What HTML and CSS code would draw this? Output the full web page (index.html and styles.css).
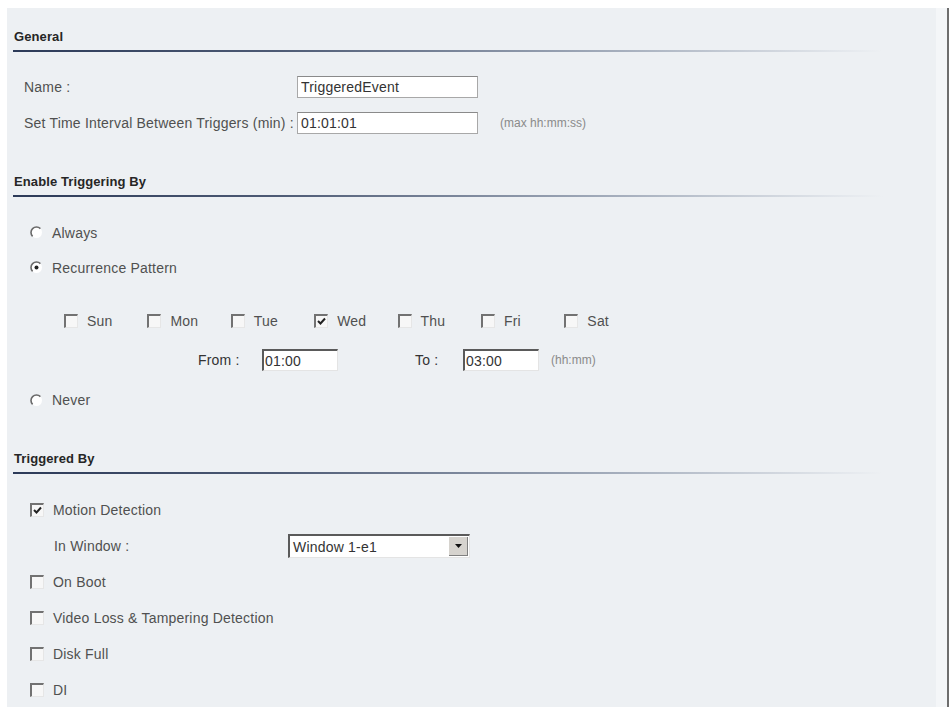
FILE: index.html
```html
<!DOCTYPE html>
<html lang="en">
<head>
    <meta charset="UTF-8">
    <title>Event Settings</title>
    <link rel="stylesheet" href="styles.css">
</head>
<body>

<div class="frame">
<div class="panel">

    <!-- General -->
    <div class="group-title">General</div>
    <div class="rule"></div>
    <div class="block first">
        <div class="field">
            <label class="field-label" for="name">Name :</label>
            <input class="text flat" id="name" type="text" value="TriggeredEvent">
        </div>
        <div class="field">
            <label class="field-label" for="interval">Set Time Interval Between Triggers (min) :</label>
            <input class="text flat" id="interval" type="text" value="01:01:01">
            <span class="hint hint-max">(max hh:mm:ss)</span>
        </div>
    </div>

    <!-- Enable Triggering By -->
    <div class="group-title gap">Enable Triggering By</div>
    <div class="rule"></div>
    <div class="block">
        <div class="option">
            <span class="radio">
                <svg width="13" height="13" viewBox="0 0 13 13"><circle cx="6.5" cy="6.5" r="5.5" fill="#fff"/><path d="M2.6 10.4 A5.5 5.5 0 0 1 10.4 2.6" fill="none" stroke="#6a6a6a" stroke-width="1.6"/></svg>
            </span>
            Always
        </div>
        <div class="option">
            <span class="radio">
                <svg width="13" height="13" viewBox="0 0 13 13"><circle cx="6.5" cy="6.5" r="5.5" fill="#fff"/><path d="M2.6 10.4 A5.5 5.5 0 0 1 10.4 2.6" fill="none" stroke="#6a6a6a" stroke-width="1.6"/><circle cx="6.5" cy="6.5" r="2" fill="#222"/></svg>
            </span>
            Recurrence Pattern
        </div>

        <div class="days">
            <div class="day"><span class="box"></span>Sun</div>
            <div class="day"><span class="box"></span>Mon</div>
            <div class="day"><span class="box"></span>Tue</div>
            <div class="day"><span class="box checked"><svg width="9" height="9" viewBox="0 0 9 9"><path d="M1 4 L3.5 6.5 L8 1.5" fill="none" stroke="#222" stroke-width="2"/></svg></span>Wed</div>
            <div class="day"><span class="box"></span>Thu</div>
            <div class="day"><span class="box"></span>Fri</div>
            <div class="day"><span class="box"></span>Sat</div>
        </div>

        <div class="range">
            <label class="range-label from" for="from">From :</label>
            <input class="text inset short" id="from" type="text" value="01:00">
            <label class="range-label to" for="to">To :</label>
            <input class="text inset short" id="to" type="text" value="03:00">
            <span class="hint hint-time">(hh:mm)</span>
        </div>

        <div class="option">
            <span class="radio">
                <svg width="13" height="13" viewBox="0 0 13 13"><circle cx="6.5" cy="6.5" r="5.5" fill="#fff"/><path d="M2.6 10.4 A5.5 5.5 0 0 1 10.4 2.6" fill="none" stroke="#6a6a6a" stroke-width="1.6"/></svg>
            </span>
            Never
        </div>
    </div>

    <!-- Triggered By -->
    <div class="group-title gap">Triggered By</div>
    <div class="rule"></div>
    <div class="block">
        <div class="option"><span class="box checked"><svg width="9" height="9" viewBox="0 0 9 9"><path d="M1 4 L3.5 6.5 L8 1.5" fill="none" stroke="#222" stroke-width="2"/></svg></span>Motion Detection</div>
        <div class="option sub">
            <span class="sub-label">In Window :</span>
            <div class="select">
                <span class="select-value">Window 1-e1</span>
                <span class="select-arrow"><svg width="7" height="4" viewBox="0 0 7 4"><path d="M0 0 H7 L3.5 4 Z" fill="#111"/></svg></span>
            </div>
        </div>
        <div class="option"><span class="box"></span>On Boot</div>
        <div class="option"><span class="box"></span>Video Loss &amp; Tampering Detection</div>
        <div class="option"><span class="box"></span>Disk Full</div>
        <div class="option"><span class="box"></span>DI</div>
    </div>

</div>
</div>

</body>
</html>
```

FILE: styles.css
```css
body {
    margin: 0;
    background-color: #fff;
    font-family: 'Liberation Sans', Arial, sans-serif;
    font-size: 14px;
    letter-spacing: 0.2px;
    color: #505050;
    overflow: hidden;
}
.frame {
    margin: 8px 0 0 7px;
    width: 940px;
    height: 720px;
    background-color: #f4f6f8;
    border-right: 2px solid #6e6e6e;
}
.panel {
    width: 929px;
    height: 100%;
    background-color: #edf0f3;
    padding: 21px 0 0 0;
    box-sizing: border-box;
}
.group-title {
    height: 16px;
    line-height: 16px;
    padding-left: 7px;
    font-size: 13px;
    font-weight: bold;
    letter-spacing: 0.1px;
    color: #262626;
}
.group-title.gap {
    margin-top: 33px;
}
.rule {
    margin: 5px 0 0 6px;
    width: 870px;
    height: 2px;
    background: linear-gradient(to right, #2c3a58 0%, #4d5a74 30%, #9aa4b4 65%, #e3e7ec 95%, rgba(237, 240, 243, 0) 100%);
}
.block {
    margin-top: 18px;
    padding-left: 17px;
}
.block.first {
    margin-top: 17px;
}
.field {
    display: flex;
    align-items: center;
    height: 36px;
}
.field-label {
    width: 273px;
    flex-shrink: 0;
    white-space: nowrap;
}
.text {
    box-sizing: border-box;
    height: 22px;
    padding: 0 3px;
    font-family: 'Liberation Sans', Arial, sans-serif;
    font-size: 14px;
    letter-spacing: 0.2px;
    color: #333;
    background-color: #fff;
    outline: none;
}
.text.flat {
    width: 181px;
    border: 1px solid #a8a8a8;
    border-top-color: #8a8a8a;
}
.text.inset {
    border-top: 2px solid #5a5a5a;
    border-left: 2px solid #5a5a5a;
    border-right: 1px solid #e4e4e4;
    border-bottom: 1px solid #e4e4e4;
    padding-left: 1px;
}
.text.short {
    width: 76px;
}
.hint {
    font-size: 12px;
    color: #8a8a8a;
    letter-spacing: 0;
}
.hint-max {
    margin-left: 22px;
}
.hint-time {
    margin-left: 12px;
}
.option {
    display: flex;
    align-items: center;
    height: 35px;
    padding-left: 6px;
}
.radio {
    width: 13px;
    height: 13px;
    margin-right: 9px;
    display: flex;
}
.box {
    box-sizing: border-box;
    width: 14px;
    height: 14px;
    margin-right: 9px;
    border-top: 2px solid #727272;
    border-left: 2px solid #727272;
    border-right: 1px solid #e6e6e6;
    border-bottom: 1px solid #e6e6e6;
    background-color: #f7f7f7;
    display: flex;
    align-items: center;
    justify-content: center;
    flex-shrink: 0;
}
.days {
    display: flex;
    height: 36px;
    align-items: center;
    margin-top: 18px;
    padding-left: 40px;
}
.day {
    width: 83.4px;
    display: flex;
    align-items: center;
}
.range {
    display: flex;
    align-items: center;
    height: 36px;
    margin-top: 3px;
    padding-left: 174px;
}
.range-label.from {
    width: 64px;
    color: #333;
}
.range-label.to {
    margin-left: 77px;
    width: 48px;
    color: #333;
}
.days + .range + .option {
    margin-top: 4px;
    height: 36px;
}
.block:last-child .option {
    height: 36px;
}
.option.sub {
    padding-left: 30px;
}
.sub-label {
    width: 234px;
}
.select {
    box-sizing: border-box;
    width: 182px;
    height: 24px;
    display: flex;
    align-items: center;
    justify-content: space-between;
    background-color: #fff;
    border-top: 2px solid #5a5a5a;
    border-left: 2px solid #5a5a5a;
    border-right: 1px solid #e4e4e4;
    border-bottom: 1px solid #e4e4e4;
    color: #333;
}
.select-value {
    padding-left: 3px;
}
.select-arrow {
    width: 19px;
    height: 19px;
    margin-right: 1px;
    background-color: #d6d3ce;
    border-right: 1px solid #808080;
    border-bottom: 1px solid #808080;
    box-sizing: border-box;
    display: flex;
    align-items: center;
    justify-content: center;
}
```
